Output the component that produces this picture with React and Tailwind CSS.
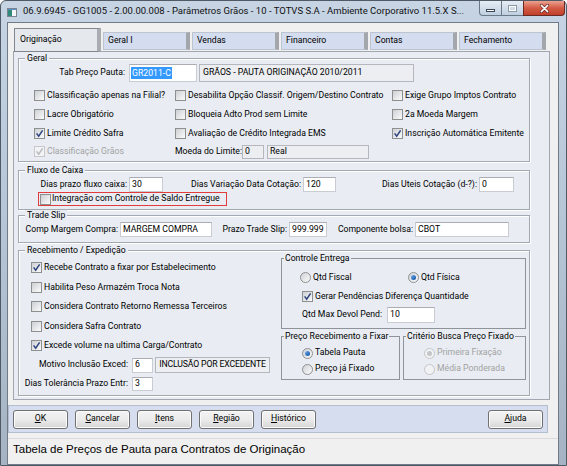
import React from 'react';

const Check = ({ checked = false, disabled = false }) => (
  <span
    className={`flex h-[11px] w-[11px] shrink-0 items-center justify-center border ${
      disabled ? 'border-[#c6c8cb] bg-[#f2f3f4]' : 'border-[#8e8f8f] bg-gradient-to-br from-[#cdd0d4] to-[#fbfbfb]'
    }`}
  >
    {checked && (
      <svg viewBox="0 0 9 9" className="h-[9px] w-[9px]">
        <path d="M1.6 4.4 L3.7 7.2 L7.6 1.4" fill="none" stroke={disabled ? '#b8babd' : '#2f447e'} strokeWidth="1.5" />
      </svg>
    )}
  </span>
);

const Radio = ({ on = false, disabled = false }) => (
  <span
    className={`flex h-[11px] w-[11px] shrink-0 items-center justify-center rounded-full border ${
      disabled ? 'border-[#c4c6c9] bg-[#f1f2f3]' : 'border-[#8e8f8f] bg-gradient-to-br from-[#cfd2d6] to-[#fbfbfb]'
    }`}
  >
    {on && (
      <span
        className={`h-[5px] w-[5px] rounded-full ${
          disabled ? 'bg-[#c3c5c8]' : 'bg-gradient-to-br from-[#6fb0f0] to-[#0b4c9c]'
        }`}
      />
    )}
  </span>
);

const CheckItem = ({ label, checked, disabled, className = '' }) => (
  <div className={`flex items-center gap-[2px] ${className}`}>
    <Check checked={checked} disabled={disabled} />
    <span className={`whitespace-nowrap ${disabled ? 'text-[#a2a2a2]' : ''}`}>{label}</span>
  </div>
);

const RadioItem = ({ label, on, disabled, className = '' }) => (
  <div className={`flex items-center gap-[2px] ${className}`}>
    <Radio on={on} disabled={disabled} />
    <span className={`whitespace-nowrap ${disabled ? 'text-[#a2a2a2]' : ''}`}>{label}</span>
  </div>
);

const Field = ({ value, readOnly, className = '' }) => (
  <div
    className={`flex shrink-0 items-center whitespace-nowrap border px-[2px] ${
      readOnly ? 'border-[#b4b8be] bg-[#eceef1]' : 'border-[#c9cdd3] border-t-[#abadb3] bg-white'
    } ${className}`}
  >
    {value}
  </div>
);

const Group = ({ title, sub, className = '', children }) => (
  <fieldset
    className={`${
      sub ? 'border border-[#8f949a]' : 'border border-[#a3a9b1] shadow-[inset_1px_1px_0_#ffffff,1px_1px_0_#ffffff]'
    } ${className}`}
  >
    <legend className={`${sub ? 'ml-[2px] px-[1px]' : 'ml-[6px] px-[2px]'} bg-[#e9edf3] leading-[10px]`}>{title}</legend>
    {children}
  </fieldset>
);

const Tab = ({ label, active }) => (
  <div
    className={
      active
        ? 'relative z-10 flex h-[24px] w-[87px] items-center border border-r-[4px] border-[#80868d] border-r-[#a9acb0] bg-[#e5e8ed] pl-[5px]'
        : 'mt-[4px] flex h-[18px] w-[87px] items-center border border-r-[4px] border-[#bcc4cf] border-r-[#a3a6aa] bg-[#d4dcef] pl-[4px]'
    }
  >
    {label}
  </div>
);

const Btn = ({ u, rest, className = '' }) => (
  <div
    className={`flex h-[19px] w-[55px] shrink-0 items-center justify-center rounded-[3px] border border-[#707070] bg-gradient-to-b from-[#f3f3f3] via-[#ebebeb] to-[#d5d5d5] shadow-[inset_0_0_0_1px_#fbfbfb] ${className}`}
  >
    <span>
      <span className="underline">{u}</span>
      {rest}
    </span>
  </div>
);

export default function App() {
  return (
    <div className="h-[466px] w-[567px] overflow-hidden bg-white font-['Roboto',sans-serif] text-[8.7px] text-black">
      <div className="flex h-full flex-col rounded-t-[6px] border border-[#4f5a66] bg-gradient-to-b from-[#c6d4e4] via-[#b6c5d6] to-[#a5b3c2]">
        {/* Title bar */}
        <div className="flex h-[21px] shrink-0">
          <svg viewBox="0 0 10 9" className="ml-[6px] mt-[7px] h-[9px] w-[10px]">
            <rect x="0.5" y="0.5" width="9" height="8" fill="#f4f6f8" stroke="#7a848f" />
            <rect x="1" y="2" width="4" height="6" fill="#2f8a7a" />
            <rect x="1" y="1" width="8" height="1" fill="#5a8fc8" />
          </svg>
          <div className="ml-[6px] flex h-[21px] items-center whitespace-nowrap text-[9.5px] text-[#111]">
            06.9.6945 - GG1005 - 2.00.00.008 - Parâmetros Grãos - 10 - TOTVS S.A - Ambiente Corporativo 11.5.X S...
          </div>
          <div className="ml-auto mr-[1px] flex h-[15px] items-start">
            <div className="flex h-[15px] w-[23px] items-center justify-center rounded-bl-[4px] border border-t-0 border-[#6b7888] bg-gradient-to-b from-[#e6edf5] to-[#bfcfe0]">
              <span className="mt-[4px] h-[3px] w-[9px] border border-[#3c4652] bg-white" />
            </div>
            <div className="flex h-[15px] w-[21px] items-center justify-center border-b border-[#6b7888] bg-gradient-to-b from-[#e6edf5] to-[#bfcfe0]">
              <span className="h-[7px] w-[9px] border border-[#8d99a7] bg-transparent shadow-[inset_0_0_0_1px_#ffffff]" />
            </div>
            <div className="flex h-[15px] w-[42px] items-center justify-center rounded-br-[4px] border border-t-0 border-[#6a2a22] bg-gradient-to-b from-[#e9a190] via-[#d45a44] to-[#c0402a]">
              <svg viewBox="0 0 12 10" className="h-[9px] w-[11px]">
                <path d="M2.5 1.5 L9.5 8.5 M9.5 1.5 L2.5 8.5" stroke="#5b2018" strokeWidth="3.2" strokeLinecap="round" />
                <path d="M2.5 1.5 L9.5 8.5 M9.5 1.5 L2.5 8.5" stroke="#ffffff" strokeWidth="1.8" strokeLinecap="round" />
              </svg>
            </div>
          </div>
        </div>

        {/* Client area */}
        <div className="ml-[6px] mr-[7px] flex flex-1 flex-col border border-[#6f7b88] bg-[#f0f0f0]">
          {/* Tabs */}
          <div className="ml-[6px] mt-[5px] flex h-[23px] gap-[2px]">
            <Tab label="Originação" active />
            <Tab label="Geral I" />
            <Tab label="Vendas" />
            <Tab label="Financeiro" />
            <Tab label="Contas" />
            <Tab label="Fechamento" />
          </div>

          {/* Tab panel */}
          <div className="ml-[5px] h-[349px] w-[537px] border border-[#a0a7b0] bg-[#e9edf3]">
            {/* Geral */}
            <Group title="Geral" className="ml-[4px] mt-[1px] h-[109px] w-[512px]">
              <div className="mt-[1px] flex h-[18px] items-center">
                <span className="w-[106px] text-right">Tab Preço Pauta:</span>
                <div className="ml-[4px] flex h-[18px] w-[68px] items-center border border-[#c9cdd3] border-t-[#abadb3] bg-white pl-[1px]">
                  <span className="bg-[#3399ff] px-[1px] leading-[12px] text-white">GR2011-C</span>
                </div>
                <Field readOnly className="ml-[2px] h-[18px] w-[215px] pl-[3px]" value="GRÃOS - PAUTA ORIGINAÇÃO 2010/2011" />
              </div>
              <div className="mt-[4px] flex h-[19px] items-center pl-[15px]">
                <CheckItem className="w-[141px]" label="Classificação apenas na Filial?" />
                <CheckItem className="w-[217px]" label="Desabilita Opção Classif. Origem/Destino Contrato" />
                <CheckItem label="Exige Grupo Imptos Contrato" />
              </div>
              <div className="flex h-[19px] items-center pl-[15px]">
                <CheckItem className="w-[141px]" label="Lacre Obrigatório" />
                <CheckItem className="w-[217px]" label="Bloqueia Adto Prod sem Limite" />
                <CheckItem label="2a Moeda Margem" />
              </div>
              <div className="flex h-[19px] items-center pl-[15px]">
                <CheckItem className="w-[141px]" label="Limite Crédito Safra" checked />
                <CheckItem className="w-[217px]" label="Avaliação de Crédito Integrada EMS" />
                <CheckItem label="Inscrição Automática Emitente" checked />
              </div>
              <div className="flex h-[18px] items-center pl-[15px]">
                <CheckItem className="w-[141px]" label="Classificação Grãos" checked disabled />
                <span className="w-[64px] whitespace-nowrap">Moeda do Limite:</span>
                <Field readOnly className="ml-[3px] h-[14px] w-[22px]" value="0" />
                <Field readOnly className="ml-[3px] h-[14px] w-[102px]" value="Real" />
              </div>
            </Group>

            {/* Fluxo de Caixa */}
            <Group title="Fluxo de Caixa" className="ml-[4px] mt-[3px] h-[45px] w-[512px]">
              <div className="mt-[2px] flex h-[15px] items-center">
                <span className="w-[108px] whitespace-nowrap text-right">Dias prazo fluxo caixa:</span>
                <Field className="ml-[2px] h-[15px] w-[34px]" value="30" />
                <span className="ml-[2px] w-[136px] whitespace-nowrap text-right">Dias Variação Data Cotação:</span>
                <Field className="ml-[2px] h-[15px] w-[33px]" value="120" />
                <span className="ml-[2px] w-[139px] whitespace-nowrap text-right">Dias Uteis Cotação (d-?):</span>
                <Field className="ml-[2px] h-[15px] w-[35px]" value="0" />
              </div>
              <div className="ml-[19px] flex h-[14px] w-[189px] items-center border border-[#e03c3c] pl-[1px]">
                <Check />
                <span className="ml-[1px] whitespace-nowrap">Integração com Controle de Saldo Entregue</span>
              </div>
            </Group>

            {/* Trade Slip */}
            <Group title="Trade Slip" className="ml-[4px] h-[33px] w-[512px]">
              <div className="mt-[2px] flex h-[15px] items-center">
                <span className="w-[99px] whitespace-nowrap text-right">Comp Margem Compra:</span>
                <Field className="ml-[2px] h-[15px] w-[92px]" value="MARGEM COMPRA" />
                <span className="w-[75px] whitespace-nowrap text-right">Prazo Trade Slip:</span>
                <Field className="ml-[2px] h-[15px] w-[38px]" value="999.999" />
                <span className="w-[86px] whitespace-nowrap text-right">Componente bolsa:</span>
                <Field className="ml-[2px] h-[15px] w-[94px]" value="CBOT" />
              </div>
            </Group>

            {/* Recebimento / Expedição */}
            <Group title="Recebimento / Expedição" className="ml-[4px] mt-[2px] h-[151px] w-[512px]">
              <div className="flex">
                <div className="w-[262px] shrink-0">
                  <div className="mt-[3px] pl-[12px]">
                    <CheckItem className="h-[19.5px]" label="Recebe Contrato a fixar por Estabelecimento" checked />
                    <CheckItem className="h-[19.5px]" label="Habilita Peso Armazém Troca Nota" />
                    <CheckItem className="h-[19.5px]" label="Considera Contrato Retorno Remessa Terceiros" />
                    <CheckItem className="h-[19.5px]" label="Considera Safra Contrato" />
                    <CheckItem className="h-[19.5px]" label="Excede volume na ultima Carga/Contrato" checked />
                  </div>
                  <div className="mt-[1.5px] flex h-[16px] items-center">
                    <span className="w-[109px] whitespace-nowrap text-right">Motivo Inclusão Exced:</span>
                    <Field className="ml-[4px] h-[15px] w-[21px]" value="6" />
                    <Field readOnly className="ml-[2px] h-[16px] w-[115px] justify-center tracking-[-0.15px]" value="INCLUSÃO POR EXCEDENTE" />
                  </div>
                  <div className="mt-[4px] flex h-[14px] items-center">
                    <span className="w-[109px] whitespace-nowrap text-right">Dias Tolerância Prazo Entr:</span>
                    <Field className="ml-[4px] h-[14px] w-[21px]" value="3" />
                  </div>
                </div>

                <div className="-mt-[2px] flex w-[245px] flex-col">
                  <Group sub title="Controle Entrega" className="h-[76px] w-[245px]">
                    <div className="mt-[8px] flex h-[14px] items-center pl-[18px]">
                      <RadioItem className="w-[108px]" label="Qtd Fiscal" />
                      <RadioItem label="Qtd Física" on />
                    </div>
                    <div className="mt-[5px] flex h-[14px] items-center pl-[20px]">
                      <CheckItem label="Gerar Pendências Diferença Quantidade" checked />
                    </div>
                    <div className="mt-[3px] flex h-[16px] items-center pl-[20px]">
                      <span className="w-[81px] whitespace-nowrap">Qtd Max Devol Pend:</span>
                      <Field className="ml-[4px] h-[16px] w-[48px]" value="10" />
                    </div>
                  </Group>
                  <div className="mt-[2px] flex">
                    <Group sub title="Preço Recebimento a Fixar" className="h-[49px] w-[119px]">
                      <RadioItem className="mt-[5px] h-[14px] pl-[20px]" label="Tabela Pauta" on />
                      <RadioItem className="mt-[2px] h-[14px] pl-[20px]" label="Preço já Fixado" />
                    </Group>
                    <Group sub title="Critério Busca Preço Fixado" className="ml-[3px] h-[49px] w-[123px]">
                      <RadioItem className="mt-[5px] h-[14px] pl-[20px]" label="Primeira Fixação" on disabled />
                      <RadioItem className="mt-[2px] h-[14px] pl-[20px]" label="Média Ponderada" disabled />
                    </Group>
                  </div>
                </div>
              </div>
            </Group>
          </div>

          {/* Buttons */}
          <div className="mt-[5px] flex h-[28px] w-[540px] items-center gap-[7px] border border-[#b3becf] bg-[#d5ddef] px-[4px]">
            <Btn u="O" rest="K" />
            <Btn u="C" rest="ancelar" />
            <Btn u="I" rest="tens" />
            <Btn u="R" rest="egião" />
            <Btn u="H" rest="istórico" />
            <Btn className="ml-auto" u="A" rest="juda" />
          </div>

          {/* Status bar */}
          <div className="mt-[5px] flex h-[22px] items-center border-t border-[#dadada] bg-[#f0f0f0] pl-[5px] font-['Liberation_Sans',sans-serif] text-[11.5px]">
            Tabela de Preços de Pauta para Contratos de Originação
          </div>
        </div>
      </div>
    </div>
  );
}
